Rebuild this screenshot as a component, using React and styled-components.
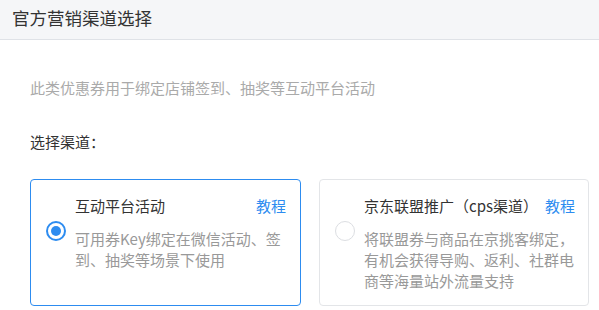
import React, { useState } from 'react';
import styled, { createGlobalStyle } from 'styled-components';

const GlobalStyle = createGlobalStyle`
  body {
    margin: 0;
    background: #ffffff;
    font-family: "Noto Sans CJK SC", "Noto Sans", sans-serif;
  }
`;

const Page = styled.div`
  width: 599px;
  height: 310px;
  overflow: hidden;
`;

const Header = styled.div`
  height: 40px;
  box-sizing: border-box;
  padding: 7px 0 0 12px;
  background: #f5f6f8;
  border-bottom: 1px solid #dfe2e7;
`;

const Title = styled.h2`
  margin: 0;
  font-size: 17.5px;
  font-weight: 400;
  line-height: 21px;
  color: #333;
`;

const Body = styled.div`
  padding: 37px 10px 0 30px;
`;

const Hint = styled.p`
  margin: 0;
  font-size: 15px;
  line-height: 21px;
  color: #aaa;
`;

const Label = styled.div`
  margin-top: 33px;
  font-size: 15px;
  line-height: 21px;
  color: #333;
`;

const Options = styled.div`
  margin-top: 27px;
  display: grid;
  grid-template-columns: 271px 270px;
  gap: 18px;
`;

const Card = styled.div`
  display: flex;
  align-items: flex-start;
  box-sizing: border-box;
  padding: 16px 14px 14px 15px;
  border: 1px solid ${p => (p.$active ? '#2d8cf0' : '#e3e5e8')};
  border-radius: 4px;
  cursor: pointer;
`;

const Radio = styled.span`
  flex: none;
  width: 20px;
  height: 20px;
  box-sizing: border-box;
  margin-top: 25px;
  margin-right: 9px;
  border-radius: 50%;
  border: ${p => (p.$checked ? '2px solid #2d8cf0' : '1px solid #dcdee2')};
  display: flex;
  align-items: center;
  justify-content: center;

  &::after {
    content: '';
    display: ${p => (p.$checked ? 'block' : 'none')};
    width: 10px;
    height: 10px;
    border-radius: 50%;
    background: #2d8cf0;
  }
`;

const Content = styled.div`
  flex: none;
  width: 211px;
`;

const TitleRow = styled.div`
  display: flex;
  justify-content: space-between;
  align-items: center;
  height: 20px;
`;

const Name = styled.span`
  font-size: 15px;
  line-height: 20px;
  color: #333;
`;

const Link = styled.a`
  font-size: 15px;
  line-height: 20px;
  color: #2d8cf0;
  text-decoration: none;
`;

const Desc = styled.p`
  margin: 12px 0 0;
  font-size: 15px;
  line-height: 21px;
  color: #999;
`;

const channels = [
  {
    id: 'platform',
    name: '互动平台活动',
    desc: '可用券Key绑定在微信活动、签到、抽奖等场景下使用',
  },
  {
    id: 'cps',
    name: '京东联盟推广（cps渠道）',
    desc: '将联盟券与商品在京挑客绑定，有机会获得导购、返利、社群电商等海量站外流量支持',
  },
];

export default function App() {
  const [selected, setSelected] = useState('platform');

  return (
    <Page>
      <GlobalStyle />
      <Header>
        <Title>官方营销渠道选择</Title>
      </Header>
      <Body>
        <Hint>此类优惠券用于绑定店铺签到、抽奖等互动平台活动</Hint>
        <Label>选择渠道：</Label>
        <Options>
          {channels.map(c => (
            <Card key={c.id} $active={selected === c.id} onClick={() => setSelected(c.id)}>
              <Radio $checked={selected === c.id} />
              <Content>
                <TitleRow>
                  <Name>{c.name}</Name>
                  <Link href="#">教程</Link>
                </TitleRow>
                <Desc>{c.desc}</Desc>
              </Content>
            </Card>
          ))}
        </Options>
      </Body>
    </Page>
  );
}
